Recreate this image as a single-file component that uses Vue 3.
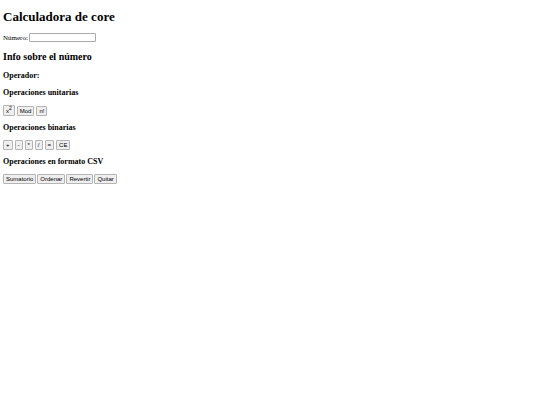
<script setup>
import { ref } from 'vue'

const numero = ref('')
const binarias = ['+', '-', '*', '/', '=', 'CE']
const csv = ['Sumatorio', 'Ordenar', 'Revertir', 'Quitar']
</script>

<template>
  <main class="page">
    <h1>Calculadora de core</h1>
    <div class="field">
      <label for="numero">Número:</label>
      <input id="numero" v-model="numero" type="text" />
    </div>
    <h2>Info sobre el número</h2>
    <h3>Operador:</h3>
    <h3>Operaciones unitarias</h3>
    <div class="row unary">
      <button type="button">x<sup>2</sup></button>
      <button type="button">Mod</button>
      <button type="button">n!</button>
    </div>
    <h3>Operaciones binarias</h3>
    <div class="row">
      <button v-for="op in binarias" :key="op" type="button">{{ op }}</button>
    </div>
    <h3>Operaciones en formato CSV</h3>
    <div class="row list">
      <button v-for="op in csv" :key="op" type="button">{{ op }}</button>
    </div>
  </main>
</template>

<style>
body {
  background: #fff;
}
</style>

<style scoped>
.page {
  padding: 9px 3px;
  font-family: "Liberation Serif", "Times New Roman", serif;
  font-size: 7px;
  line-height: 8px;
  color: #000;
}

h1 {
  margin: 0 0 8px;
  font-size: 13px;
  line-height: 16px;
}

h2 {
  margin: 9px 0 8px;
  font-size: 10px;
  line-height: 12px;
}

h3 {
  margin: 7px 0 8px;
  font-size: 8px;
  line-height: 9px;
}

.field {
  display: flex;
  align-items: center;
  gap: 1px;
}

input {
  box-sizing: border-box;
  width: 67px;
  height: 9px;
  padding: 0 1px;
  border: 1px solid #aaa;
  border-radius: 1px;
  background: #fff;
  font: 6px "Liberation Sans", Arial, sans-serif;
}

.row {
  display: flex;
  align-items: flex-end;
  gap: 2px;
}

.list {
  gap: 1px;
}

button {
  box-sizing: border-box;
  height: 10px;
  padding: 0 2px;
  border: 1px solid #b4b4b4;
  border-radius: 1px;
  background: #efefef;
  color: #000;
  font: 6px/8px "Liberation Sans", Arial, sans-serif;
}

.unary button:first-child {
  height: 11px;
}

sup {
  font-size: 5px;
  line-height: 0;
}
</style>
